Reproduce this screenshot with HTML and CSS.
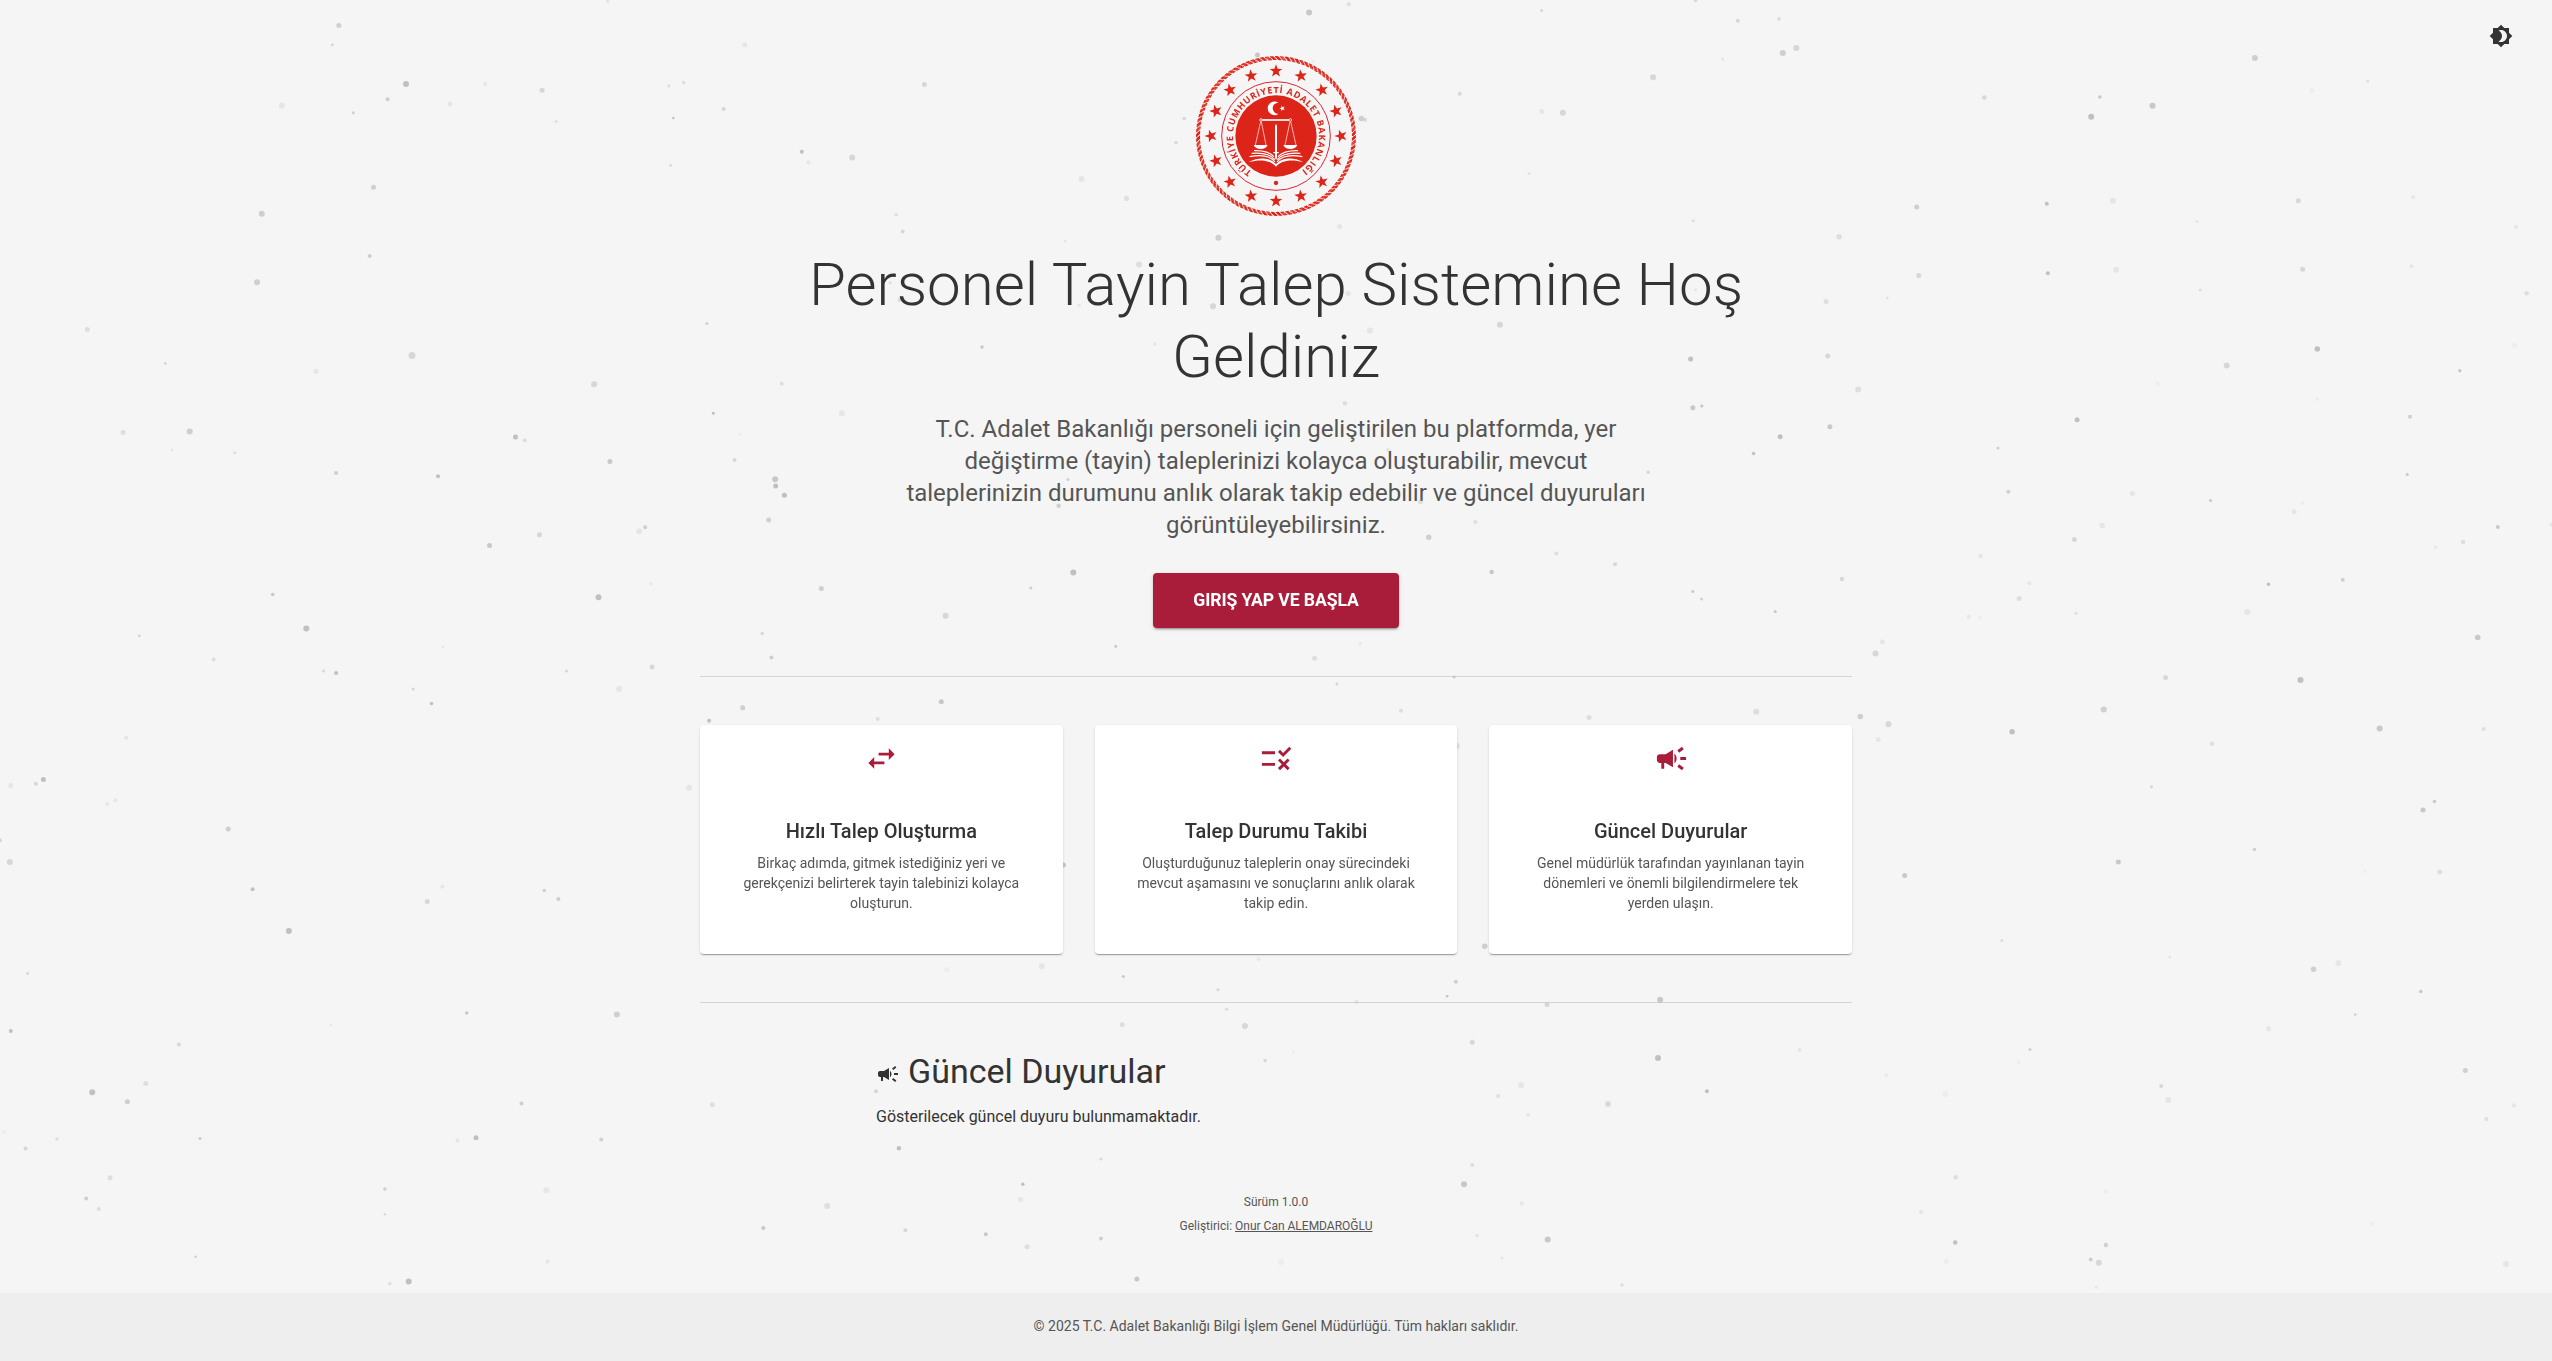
FILE: index.html
```html
<!DOCTYPE html>
<html lang="tr">
<head>
<meta charset="utf-8">
<title>Personel Tayin Talep Sistemi</title>
<link rel="stylesheet" href="styles.css">
</head>
<body>
<svg class="particles" id="particles" aria-hidden="true"></svg>

<button class="theme-toggle" aria-label="Tema">
  <svg class="icon" viewBox="0 0 24 24"><path d="M20 8.69V4h-4.69L12 .69 8.69 4H4v4.69L.69 12 4 15.31V20h4.69L12 23.31 15.31 20H20v-4.69L23.31 12 20 8.69zM12 18c-.89 0-1.74-.2-2.5-.55C11.56 16.5 13 14.42 13 12s-1.44-4.5-3.5-5.45C10.26 6.2 11.11 6 12 6c3.31 0 6 2.69 6 6s-2.69 6-6 6z"/></svg>
</button>

<main class="container">
  <header class="hero">
    <svg class="emblem" viewBox="30 30 480 480" role="img" aria-label="Adalet Bakanlığı">
      <defs>
        <path id="ring-text" d="M270 399A129 129 0 0 1 270 141A129 129 0 0 1 270 399"/>
        <path id="star" d="M0-20L4.7-6.5 19-6.2 7.6 2.5 11.8 16.2 0 8 -11.8 16.2 -7.6 2.5 -19-6.2 -4.7-6.5Z"/>
      </defs>
      <g class="rope">
        <circle cx="270" cy="270" r="229.5" pathLength="100" stroke-dashoffset="-.3"/>
        <circle cx="270" cy="270" r="232.5" pathLength="100" stroke-dashoffset="-.1"/>
        <circle cx="270" cy="270" r="235.5" pathLength="100" stroke-dashoffset=".1"/>
        <circle cx="270" cy="270" r="238" pathLength="100" stroke-dashoffset=".3"/>
      </g>
      <g class="red" id="stars"></g>
      <circle class="ring" cx="270" cy="270" r="163"/>
      <circle class="red" cx="270" cy="270" r="122"/>
      <circle class="red" cx="270" cy="411" r="6.5"/>
      <text class="ring-label"><textPath href="#ring-text" startOffset="76" textLength="652">TÜRKİYE CUMHURİYETİ ADALET BAKANLIĞI</textPath></text>
      <g class="white">
        <path d="M277 170A20.5 20.5 0 1 0 277 204A17 17 0 1 1 277 170Z"/>
        <use href="#star" transform="translate(289 187) rotate(-90) scale(.45)"/>
        <path d="M267 240l3-7 3 7v78h5v4h-5v14l-3 5-3-5v-14h-5v-4h5z"/>
        <path d="M203 297h42c-3 8-11 12-21 12s-18-4-21-12zM292 297h42c-3 8-11 12-21 12s-18-4-21-12z"/>
        <path d="M270 362c-15-18-42-24-82-14c34-18 66-12 82 6c16-18 48-24 82-6c-40-10-67-4-82 14z"/>
      </g>
      <g class="lines">
        <path d="M229 222h80" stroke-width="5"/>
        <circle cx="225" cy="222" r="4"/><circle cx="313" cy="222" r="4"/>
        <path d="M224 227L208 297M226 227L240 297M312 227L297 297M314 227L330 297" stroke-width="2"/>
        <path d="M267 348c-14-19-36-24-76-16M267 341c-14-17-35-22-70-19M264 332c-12-13-28-19-60-18M273 348c14-19 36-24 76-16M273 341c14-17 35-22 70-19M276 332c12-13 28-19 60-18" stroke-width="3.6"/>
      </g>
    </svg>
    <h1 class="hero-title">Personel Tayin Talep Sistemine Hoş Geldiniz</h1>
    <p class="hero-text">T.C. Adalet Bakanlığı personeli için geliştirilen bu platformda, yer değiştirme (tayin) taleplerinizi kolayca oluşturabilir, mevcut taleplerinizin durumunu anlık olarak takip edebilir ve güncel duyuruları görüntüleyebilirsiniz.</p>
    <a class="cta">GIRIŞ YAP VE BAŞLA</a>
  </header>

  <hr class="divider">

  <section class="cards">
    <article class="card">
      <svg class="card-icon" viewBox="0 0 24 24"><path d="M6.99 11L3 15l3.99 4v-3H14v-2H6.99v-3zM21 9l-3.99-4v3H10v2h7.01v3L21 9z"/></svg>
      <h2 class="card-title">Hızlı Talep Oluşturma</h2>
      <p class="card-text">Birkaç adımda, gitmek istediğiniz yeri ve gerekçenizi belirterek tayin talebinizi kolayca oluşturun.</p>
    </article>
    <article class="card">
      <svg class="card-icon" viewBox="0 0 24 24"><path d="M16.54 11L13 7.46l1.41-1.41 2.12 2.12 4.24-4.24 1.41 1.41L16.54 11zM11 7H2v2h9V7zm10 6.41L19.59 12 17 14.59 14.41 12 13 13.41 15.59 16 13 18.59 14.41 20 17 17.41 19.59 20 21 18.59 18.41 16 21 13.41zM11 15H2v2h9v-2z"/></svg>
      <h2 class="card-title">Talep Durumu Takibi</h2>
      <p class="card-text">Oluşturduğunuz taleplerin onay sürecindeki mevcut aşamasını ve sonuçlarını anlık olarak takip edin.</p>
    </article>
    <article class="card">
      <svg class="card-icon" viewBox="0 0 24 24"><path d="M18 11v2h4v-2h-4zM16 17.61c.96.71 2.21 1.65 3.2 2.39.4-.53.8-1.07 1.2-1.6-.99-.74-2.24-1.68-3.2-2.4-.4.54-.8 1.08-1.2 1.61zM20.4 5.6c-.4-.53-.8-1.07-1.2-1.6-.99.74-2.24 1.68-3.2 2.4.4.53.8 1.07 1.2 1.6.96-.72 2.21-1.65 3.2-2.4zM4 9c-1.1 0-2 .9-2 2v2c0 1.1.9 2 2 2h1v4h2v-4h1l5 3V6L8 9H4zm11.5 3c0-1.33-.58-2.53-1.5-3.35v6.69c.92-.81 1.5-2.01 1.5-3.34z"/></svg>
      <h2 class="card-title">Güncel Duyurular</h2>
      <p class="card-text">Genel müdürlük tarafından yayınlanan tayin dönemleri ve önemli bilgilendirmelere tek yerden ulaşın.</p>
    </article>
  </section>

  <hr class="divider">

  <section class="news">
    <h2 class="news-title"><svg class="news-icon" viewBox="0 0 24 24"><path d="M18 11v2h4v-2h-4zM16 17.61c.96.71 2.21 1.65 3.2 2.39.4-.53.8-1.07 1.2-1.6-.99-.74-2.24-1.68-3.2-2.4-.4.54-.8 1.08-1.2 1.61zM20.4 5.6c-.4-.53-.8-1.07-1.2-1.6-.99.74-2.24 1.68-3.2 2.4.4.53.8 1.07 1.2 1.6.96-.72 2.21-1.65 3.2-2.4zM4 9c-1.1 0-2 .9-2 2v2c0 1.1.9 2 2 2h1v4h2v-4h1l5 3V6L8 9H4zm11.5 3c0-1.33-.58-2.53-1.5-3.35v6.69c.92-.81 1.5-2.01 1.5-3.34z"/></svg>Güncel Duyurular</h2>
    <p class="news-empty">Gösterilecek güncel duyuru bulunmamaktadır.</p>
  </section>

  <section class="about">
    <p>Sürüm 1.0.0</p>
    <p>Geliştirici: <a class="link">Onur Can ALEMDAROĞLU</a></p>
  </section>
</main>

<footer class="footer">© 2025 T.C. Adalet Bakanlığı Bilgi İşlem Genel Müdürlüğü. Tüm hakları saklıdır.</footer>
<script src="script.js"></script>
</body>
</html>
```
FILE: styles.css
```css
* { box-sizing: border-box; }

body {
  margin: 0;
  min-height: 100vh;
  display: flex;
  flex-direction: column;
  background: #f5f5f5;
  color: #333;
  font-family: Roboto, "Liberation Sans", sans-serif;
  overflow: hidden;
}

h1, h2, p { margin: 0; }

.particles {
  position: fixed;
  inset: 0;
  width: 100%;
  height: 100%;
  pointer-events: none;
  fill: #aaa;
}

.theme-toggle {
  position: absolute;
  top: 16px;
  right: 31px;
  width: 40px;
  height: 40px;
  padding: 8px;
  border: 0;
  background: none;
  color: #333;
  z-index: 1;
}

.icon { display: block; width: 24px; height: 24px; fill: currentColor; }

.container {
  flex: 1;
  width: 1152px;
  margin: 0 auto;
  padding-top: 56px;
}

.hero {
  display: flex;
  flex-direction: column;
  align-items: center;
  text-align: center;
  padding-bottom: 48px;
}

.emblem {
  width: 160px;
  height: 160px;
  margin-bottom: 33px;
  position: relative;
  z-index: 1;
}
.red { fill: #dc2418; }
.white { fill: #fff; }
.ring { fill: none; stroke: #dc2436; stroke-width: 3; }
.rope circle { fill: none; stroke: #dc2418; stroke-width: 3.4; stroke-dasharray: .72 .28; }
.lines { fill: none; stroke: #fff; }
.lines circle { stroke-width: 2.5; }
.ring-label { fill: #dc2418; font: 700 27px "Open Sans", "Noto Sans", sans-serif; }

.hero-title {
  max-width: 1100px;
  margin-bottom: 20px;
  font-size: 60px;
  font-weight: 300;
  line-height: 72px;
}

.hero-text {
  max-width: 752px;
  margin-bottom: 32px;
  color: #555;
  font-size: 24px;
  line-height: 32px;
}

.cta {
  padding: 12px 40px;
  border-radius: 4px;
  background: #a91d3a;
  color: #fff;
  font-size: 17.6px;
  font-weight: 700;
  line-height: 30.8px;
  letter-spacing: -0.1px;
  position: relative;
  z-index: 1;
  box-shadow: 0 3px 1px -2px rgba(0,0,0,.2), 0 2px 2px rgba(0,0,0,.14), 0 1px 5px rgba(0,0,0,.12);
}

.divider {
  margin: 0;
  border: 0;
  border-top: 1px solid rgba(0,0,0,.13);
}

.cards {
  display: grid;
  grid-template-columns: repeat(3, 1fr);
  gap: 32px;
  padding: 48px 0;
}

.card {
  display: flex;
  flex-direction: column;
  align-items: center;
  padding: 16px 32px 41px;
  border-radius: 4px;
  background: #fff;
  text-align: center;
  position: relative;
  z-index: 1;
  box-shadow: 0 2px 1px -1px rgba(0,0,0,.2), 0 1px 1px rgba(0,0,0,.14), 0 1px 3px rgba(0,0,0,.12);
}

.card-icon { width: 35px; height: 35px; margin: 0 0 39px 1px; fill: #a91d3a; }

.card-title {
  margin-bottom: 6px;
  font-size: 20px;
  font-weight: 500;
  line-height: 32px;
}

.card-text {
  color: #555;
  font-size: 14px;
  line-height: 20px;
}

.news {
  max-width: 800px;
  margin: 0 auto;
  padding: 47px 0 63px;
}

.news-title {
  margin-bottom: 13px;
  font-size: 34px;
  font-weight: 400;
  line-height: 42px;
}

.news-icon { width: 24px; height: 24px; margin-right: 8px; vertical-align: middle; fill: #333; }

.news-empty {
  font-size: 16px;
  line-height: 24px;
}

.about {
  display: flex;
  flex-direction: column;
  align-items: center;
  gap: 4px;
  color: #555;
  font-size: 12px;
  line-height: 20px;
}

.link { text-decoration: underline; }

.footer {
  padding: 23px 24px 25px;
  background: #eee;
  color: #555;
  font-size: 14px;
  line-height: 20px;
  text-align: center;
  position: relative;
  z-index: 1;
}
```
FILE: script.js
```js
const NS = 'http://www.w3.org/2000/svg';

// Particle field in six sections; x and y run over a 1568-unit grid per section.
// Each entry: x, y, diameter, strength (1-9).
const GRID = 1568;
const sections = [
  { x: 0, y: 0, w: 850, h: 680, dots: [
    [625,59,5,5],[613,103,2.5,5],[749,194,6,7],[715,229,4,5],[520,243,6,2],[652,260,3,5],[830,240,5,2],[895,194,4,2],[1000,208,5,4],[1026,280,3,3],[1121,3,3.5,2],[1374,103,5,2],[1261,190,3.5,3],[1234,198,3,3],[1335,251,4,4],[1242,272,2.5,7],[1479,350,4,7],[1491,375,4,2],[1237,381,3,3],[689,432,5,5],[483,493,6,5],[682,590,4,5],[474,651,6,5],[161,760,5,3],[305,838,2.5,5],[583,856,5,2],[760,820,7,4],[1304,746,3,5],[1096,886,6,4],[1442,885,4,3],[1316,953,3,7],[1553,953,6,2],[227,997,5,3],[350,995,6,5],[317,1037,3,2],[433,1044,3,3],[620,1091,4,5],[808,1098,4,7],[951,1008,5,7],[968,1015,4,3],[1125,1064,5,6],[1364,1002,3,1],[1355,1061,4,4],[1430,1105,6,6],[1431,1121,5,7],[1447,1142,5,7],[1418,1199,5,5],[995,1233,5,4],[903,1258,5,6],[1190,1216,4,5],[1179,1225,6,2],[503,1371,3.5,6],[565,1449,6,7],[257,1466,3,4],[394,1521,4,3],[817,1492,3,2],[1201,1346,3,2],[1104,1377,6,7],[1203,1538,5,4],[1045,1547,3,4],[597,1547,3,4],[620,1552,4,7],[1515,1357,5,5],[1406,1461,3.5,4],[1423,1516,4,5]] },
  { x: 0, y: 680, w: 850, h: 681, dots: [
    [762,21,3,4],[796,54,3.5,7],[1142,21,6,2],[1370,64,5,5],[1308,94,4,7],[233,133,4,2],[80,229,5,7],[66,239,4,4],[20,243,5,2],[213,277,4,2],[198,285,4,2],[421,343,5,5],[0,369,4,4],[18,419,6,4],[466,482,4,7],[533,578,6,7],[788,510,5,4],[816,476,4,2],[1004,485,3.5,5],[1030,504,4,5],[1271,248,6,2],[51,676,3,4],[861,767,3.5,6],[1138,770,6,5],[610,794,2.5,2],[20,808,4,7],[330,839,4,4],[269,929,5,3],[170,949,6,7],[235,971,5,5],[962,975,4,5],[1314,978,5,3],[7,1040,4,1],[105,1057,3.5,3],[47,1079,4,4],[369,1056,3,6],[844,1061,4,2],[878,1054,5,7],[1109,1058,4,5],[203,1146,5,3],[159,1194,4,5],[182,1218,4,3],[710,1172,3.5,5],[710,1230,2.5,4],[1008,1175,6,2],[1526,1211,6,3],[1408,1262,4,6],[361,1328,2.5,5],[1010,1339,4,2],[719,1390,3.5,3],[754,1385,6,7]] },
  { x: 850, y: 0, w: 852, h: 680, dots: [
    [845,29,6,6],[918,10,4,3],[1273,24,3,4],[1556,0,4,4],[1478,178,6,4],[137,195,5,4],[750,127,5,6],[852,142,3,1],[1122,216,4,4],[1273,257,5,2],[1312,260,6,4],[941,273,5.5,5],[948,276,4,4],[615,273,3.5,4],[600,329,3.5,4],[4,363,6,4],[426,413,6,2],[509,458,5,3],[1250,400,3,2],[85,495,3.5,3],[97,534,4,4],[901,522,5,2],[1552,509,3,3],[678,548,6,5],[396,556,3,2],[532,610,6,3],[74,652,3,3],[91,692,4,3],[422,704,3,2],[917,677,5,2],[668,706,6,4],[1556,668,3,2],[1196,749,6,4],[957,762,6,2],[561,794,3.5,2],[243,800,3.5,6],[1547,828,5,7],[911,930,4.5,3],[1551,940,5,6],[1567,936,3,4],[990,1037,4,2],[401,1106,3,5],[384,1166,4.5,5],[1299,1110,3,1],[1050,1157,5,3],[1469,1089,3.5,4],[1151,1204,4,3],[1065,1239,5.5,5],[1300,1276,4,3],[1408,1301,4,4],[411,1320,6,7],[1181,1319,4.5,6],[333,1356,3,5],[1551,1364,3,6],[1567,1381,3,5],[176,1420,6,4],[489,1490,3,6],[939,1484,3,2],[855,1518,5,3],[1112,1561,3,5]] },
  { x: 850, y: 680, w: 852, h: 681, dots: [
    [896,9,3,4],[168,50,5,6],[51,90,4,3],[1014,71,4,3],[1360,86,5,3],[1117,152,6,3],[393,426,5,6],[1168,613,5.5,5],[178,667,5,1],[353,659,6,2],[752,643,3.5,2],[503,683,3,6],[677,713,3,4],[1115,695,4,5],[1099,728,2.5,7],[932,741,4,2],[1283,747,5,4],[1491,736,6,6],[693,758,3.5,3],[501,794,5,3],[727,797,6,4],[1145,834,5,4],[816,857,3,1],[764,876,3.5,4],[1487,870,6,7],[333,917,3.5,2],[48,947,4,4],[1235,933,6,2],[1193,958,4,3],[1395,976,5.5,4],[1248,1001,4,2],[90,1078,4.5,7],[462,1103,3,4],[318,1161,3.5,7],[314,1196,5,2],[1145,1117,4,3],[1130,1161,6,6],[1236,1205,4,2],[102,1267,4,4],[250,1276,4,6],[462,1286,4,5],[326,1305,5,3],[1154,1279,3,3],[1284,1288,6,6],[1200,1331,3,2],[793,1340,6,1],[528,1379,5,6],[1421,1393,3.5,3]] },
  { x: 1702, y: 0, w: 850, h: 680, dots: [
    [66,48,4,4],[142,44,4,3],[174,111,6,4],[149,122,6,5],[38,136,3,2],[521,225,4.5,4],[734,224,3.5,6],[831,244,6,6],[718,269,6,7],[1020,134,6,5],[1125,209,5,1],[1228,187,3,3],[396,477,5,5],[636,470,4,7],[758,463,6,2],[1100,463,5,4],[1312,455,4,2],[913,511,3,2],[1502,523,4,2],[253,546,5.5,3],[400,635,5,4],[638,630,4,7],[764,622,6,2],[1108,621,5,4],[1309,614,4,2],[919,669,3,3],[1521,676,4.5,3],[229,695,5,3],[342,687,2.5,3],[232,821,5,4],[288,898,6,3],[1135,805,5.5,7],[1499,796,5,1],[968,843,6,4],[1398,855,3.5,6],[840,885,4,1],[1135,920,4,1],[1306,961,4,5],[692,968,5,7],[236,984,5,6],[144,1007,5,7],[95,1046,3.5,7],[546,1033,3,5],[0,936,3,4],[565,1134,4,5],[794,1138,5,2],[1301,1094,3,6],[938,1154,3,6],[1108,1160,4,1],[1092,1180,5,2],[738,1212,5.5,2],[687,1244,5,4],[1468,1215,4,6],[1404,1250,4.5,3],[1353,1261,3,2],[514,1282,4.5,2],[1182,1337,4,5],[258,1335,4.5,4],[604,1345,4,2],[1045,1347,3.5,7],[585,1380,5,3],[690,1414,3,3],[135,1410,3,6],[1006,1411,6,2],[492,1422,4,2],[513,1424,4,1],[333,1480,5,2],[320,1507,6,4],[1431,1470,5.5,6],[855,1562,5,4],[1567,1210,4,2],[1104,1568,6,7]] },
  { x: 1702, y: 680, w: 850, h: 681, dots: [
    [100,73,6,3],[292,84,5.5,5],[344,102,6,4],[325,137,5,2],[572,119,5.5,7],[741,68,6,5],[1250,112,6,6],[1442,113,4,3],[941,147,4.5,3],[829,246,3,4],[1351,280,3.5,6],[1330,299,5,6],[1019,390,3.5,5],[768,419,5,6],[374,450,5,6],[1223,441,3,1],[1361,442,5,3],[553,600,3,3],[863,638,3,2],[1128,666,5.5,5],[1174,652,6,2],[1326,717,3.5,6],[1205,770,2.5,5],[1045,803,5,2],[180,852,4,2],[605,851,3,5],[584,881,4,1],[340,910,3,2],[9,947,4,7],[449,953,6,1],[847,935,4,4],[860,967,6,2],[1408,899,5,5],[1498,980,4.5,2],[1447,1011,4,3],[468,1145,4.5,3],[745,1177,5,1],[404,1225,4,2],[1237,1252,4,1],[467,1295,4.5,7],[451,1339,5,1],[745,1301,4.5,5],[717,1334,4,5],[732,1342,6,4],[1483,1345,6,2],[727,1398,3,2]] }
];

const field = document.getElementById('particles');
for (const s of sections) {
  for (const [x, y, d, strength] of s.dots) {
    const c = document.createElementNS(NS, 'circle');
    c.setAttribute('cx', (s.x + x * s.w / GRID).toFixed(1));
    c.setAttribute('cy', (s.y + y * s.h / GRID).toFixed(1));
    c.setAttribute('r', d / 2);
    c.setAttribute('fill-opacity', strength / 10);
    field.appendChild(c);
  }
}

// Sixteen stars around the emblem, the side ones slightly tilted
const stars = document.getElementById('stars');
for (let i = 0; i < 16; i++) {
  const a = i * Math.PI / 8;
  const u = document.createElementNS(NS, 'use');
  const tilt = -18 * Math.abs(Math.sin(a));
  u.setAttribute('href', '#star');
  u.setAttribute('transform', `translate(${270 + 195 * Math.sin(a)} ${270 - 195 * Math.cos(a)}) rotate(${tilt})`);
  stars.appendChild(u);
}
```
